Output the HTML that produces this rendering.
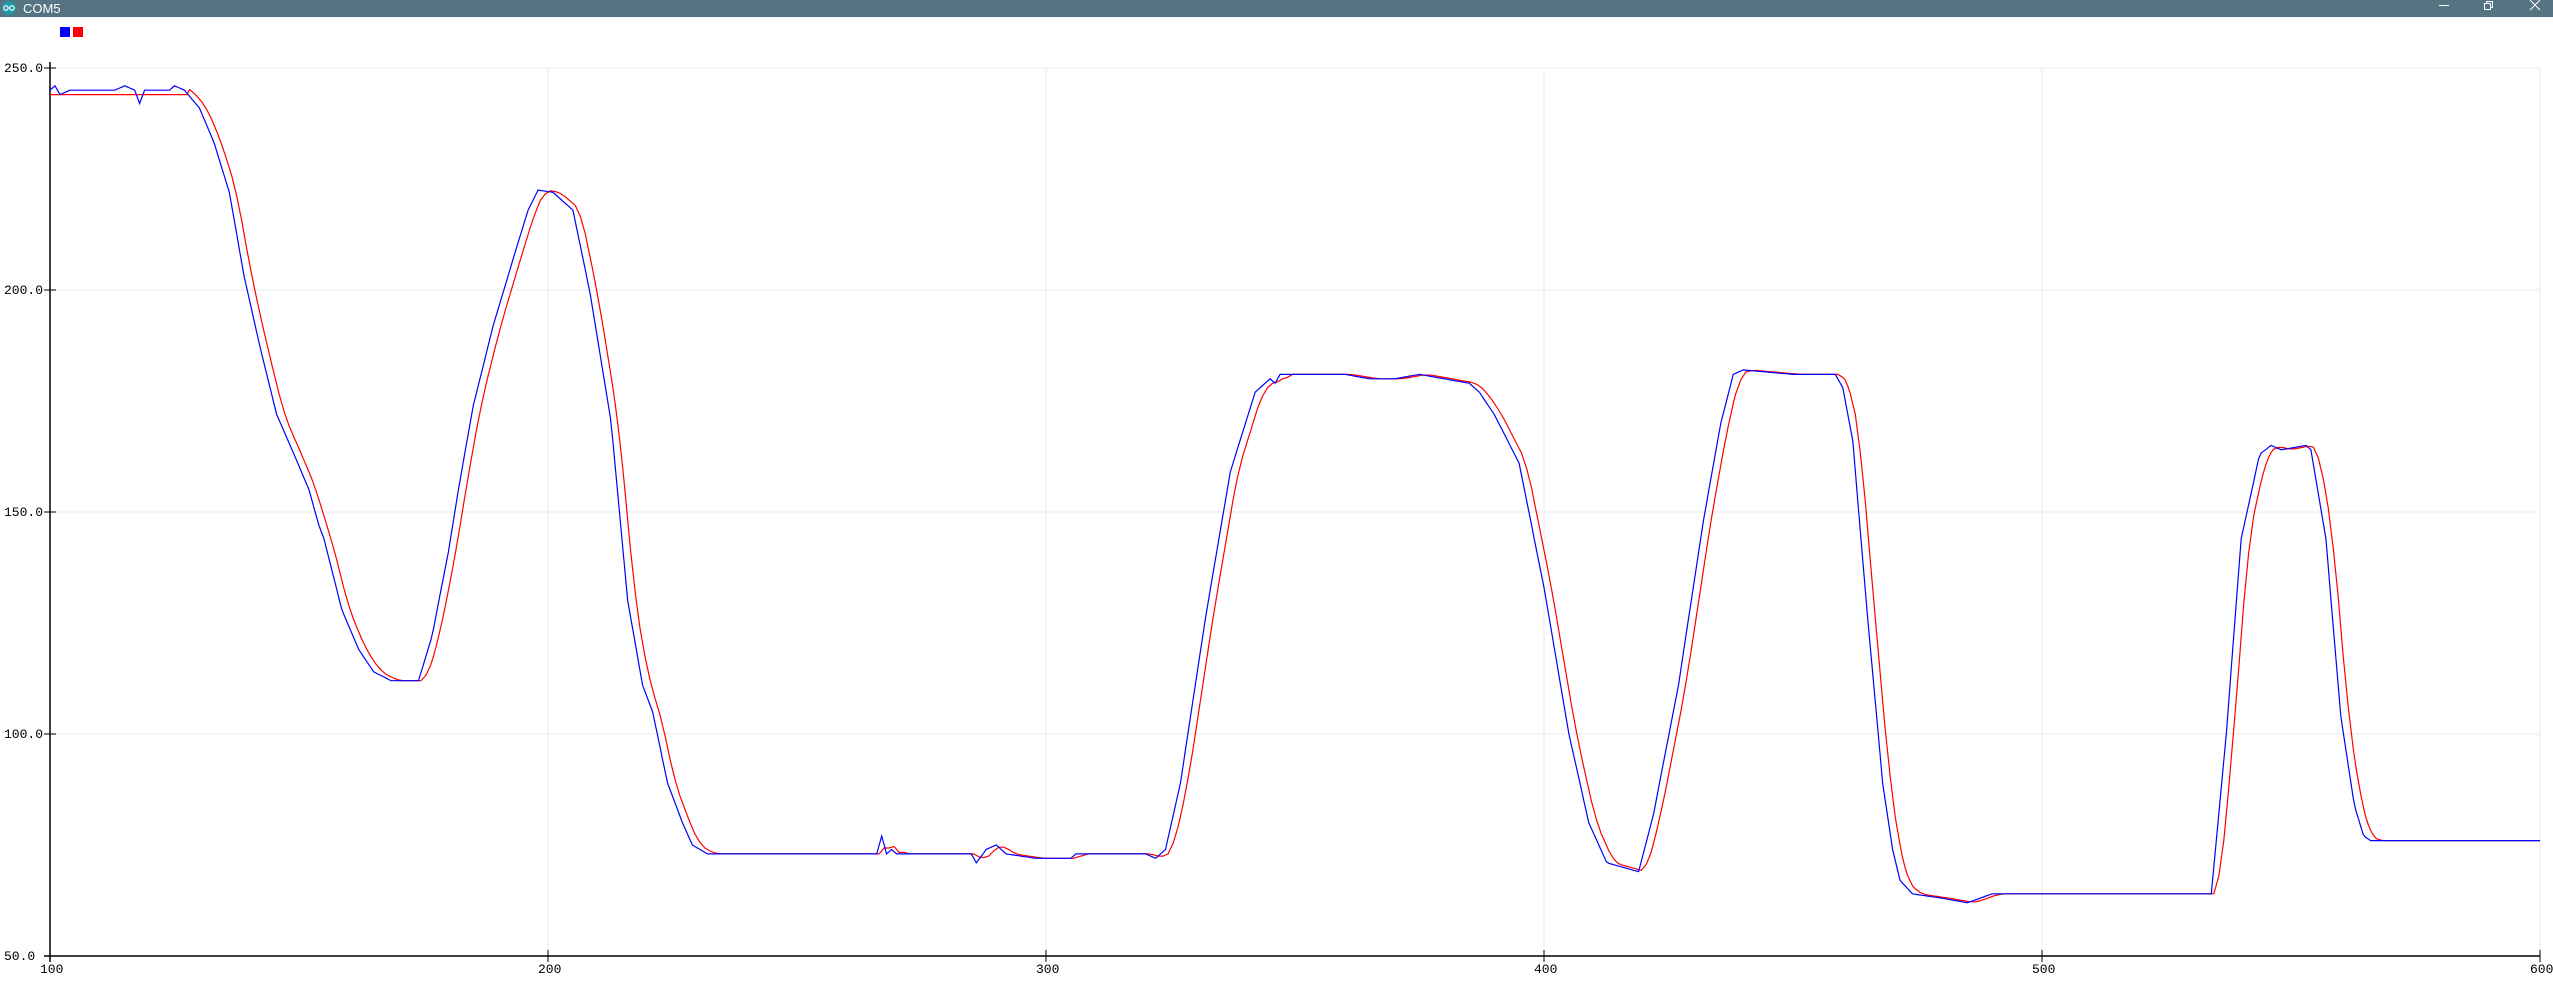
<!DOCTYPE html>
<html><head><meta charset="utf-8"><style>
html,body{margin:0;padding:0;width:2553px;height:986px;overflow:hidden;background:#fff;font-family:"Liberation Sans",sans-serif}
#tb{position:absolute;left:0;top:0;width:2553px;height:17px;background:#557381;color:#fff;font-size:13px}
</style></head><body>
<div id="tb">
<svg width="20" height="17" style="position:absolute;left:1px;top:0"><circle cx="8" cy="8" r="7" fill="#1e9aa5"/><circle cx="5" cy="8" r="2.2" fill="none" stroke="#fff" stroke-width="1.2"/><circle cx="11" cy="8" r="2.2" fill="none" stroke="#fff" stroke-width="1.2"/></svg>
<span style="position:absolute;left:23px;top:1px">COM5</span>
<div style="position:absolute;left:2439px;top:5px;width:10px;height:1px;background:#fff"></div>
<svg width="12" height="12" style="position:absolute;left:2483px;top:0"><rect x="1.5" y="3.5" width="6" height="6" fill="none" stroke="#fff"/><path d="M3.5 3.5V1.5H9.5V7.5H7.5" fill="none" stroke="#fff"/></svg>
<svg width="12" height="12" style="position:absolute;left:2529px;top:0"><path d="M1 0L11 10M11 0L1 10" stroke="#fff"/></svg>
</div>
<div style="position:absolute;left:60px;top:27px;width:10px;height:10px;background:#00f"></div>
<div style="position:absolute;left:73px;top:27px;width:10px;height:10px;background:#f00"></div>
<svg id="s" width="2553" height="986" style="position:absolute;left:0;top:0" font-family="Liberation Mono, monospace" font-size="13"></svg>
<script>
var s=document.getElementById('s'),h='';
function X(v){return 50+(v-100)*4.98}
function Y(v){return 68+(250-v)*4.44}
for(var v=50;v<=250;v+=50){var y=Y(v);h+='<line x1="50" x2="2540" y1="'+y+'" y2="'+y+'" stroke="#ebebeb"/>';h+='<line x1="44" x2="56" y1="'+y+'" y2="'+y+'" stroke="#000"/>';h+='<text x="4" y="'+(y+4)+'">'+v.toFixed(1)+'</text>';}
for(var v=100;v<=600;v+=100){var x=X(v);h+='<line x1="'+x+'" x2="'+x+'" y1="68" y2="956" stroke="#ebebeb"/>';h+='<line x1="'+x+'" x2="'+x+'" y1="950" y2="962" stroke="#000"/>';h+='<text x="'+(x-10)+'" y="973">'+v+'</text>';}
h+='<line x1="50" x2="50" y1="62" y2="962" stroke="#000" stroke-width="1.5"/><line x1="44" x2="2540" y1="956" y2="956" stroke="#000" stroke-width="1.5"/>';
var B=[[100,245],[101,246],[102,244],[104,245],[113,245],[115,246],[117,245],[118,242],[119,245],[124,245],[125,246],[127,245],[130,241],[133,233],[136,222],[139,203],[142,188],[145.5,172],[149,163],[152,155],[154,147],[155,144],[158.6,128],[162,119],[165,114],[168.5,112],[174,112],[176.7,122],[180,141],[182,155],[185,174],[189,192],[193,207],[196,218],[198,222.5],[201,222],[203,220],[205,218],[208.5,199],[212.7,170],[216,130],[219,111],[221,105],[224,89],[227,80],[229,75],[232,73],[250,73],[266,73],[267,77],[268,73],[269,74],[270,73],[285,73],[286,71],[288,74],[290,75],[292,73],[298,72],[305,72],[306,73],[320,73],[322,72],[324,74],[327,89],[332,126],[337,159],[342,177],[345,180],[346,179],[347,181],[352,181],[360,181],[365,180],[370,180],[375,181],[380,180],[385,179],[387,177],[390,172],[395,161],[400,133],[405,100],[409,80],[412.6,71],[419,69],[422,82],[427,111],[432,148],[435.5,170],[438,181],[440,182],[450,181],[458.5,181],[460,178],[462,166],[465,126],[468,89],[470,74],[471.5,67],[474,64],[480,63],[485,62],[490,64],[534,64],[537,100],[540,144],[543.7,163],[546,165],[548,164],[553,165],[554,164],[557,144],[560,104],[562.7,84],[564.6,77],[566,76],[600,76]];
function interp(a,t){if(t<=a[0][0])return a[0][1];for(var i=1;i<a.length;i++){if(t<=a[i][0]){var p=a[i-1],q=a[i];return p[1]+(q[1]-p[1])*(t-p[0])/(q[0]-p[0]);}}return a[a.length-1][1];}
var pb='',pr='';
for(var t=100;t<=600;t+=0.5){pb+=X(t).toFixed(1)+','+Y(interp(B,t)).toFixed(1)+' ';
var r=(interp(B,t-0.5)+interp(B,t-1.5)+interp(B,t-2.5))/3;if(t<128)r=244;pr+=X(t).toFixed(1)+','+Y(r).toFixed(1)+' ';}
h+='<polyline points="'+pr+'" fill="none" stroke="#f00" stroke-width="1.2"/>';
h+='<polyline points="'+pb+'" fill="none" stroke="#00f" stroke-width="1.2"/>';
s.innerHTML=h;
</script>
</body></html>
